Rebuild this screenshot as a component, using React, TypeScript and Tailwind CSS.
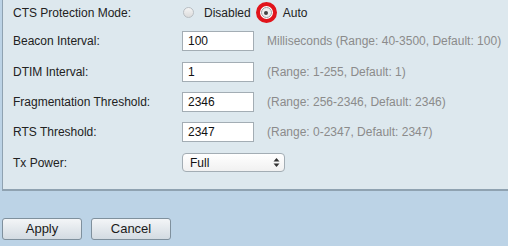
type FieldRowProps = {
  label: string;
  value: string;
  hint: string;
  className: string;
};

function FieldRow({ label, value, hint, className }: FieldRowProps) {
  return (
    <div className={`flex items-center ${className}`}>
      <span className="w-[169px] shrink-0">{label}</span>
      <div className="flex h-[20px] w-[72px] items-center border border-[#a3adb4] bg-white pl-[5px] text-[#111]">
        {value}
      </div>
      <span className="ml-[13px] text-[#8b8b8b]">{hint}</span>
    </div>
  );
}

export default function App() {
  return (
    <div className="h-[246px] w-[508px] overflow-hidden bg-[#bcd3e6] font-['Liberation_Sans',Arial,sans-serif] text-[12px] text-[#222]">
      <div className="ml-[2px] h-[191px] border-b-2 border-l border-[#8fa2b1] bg-[#dde8ee] pl-[10px]">
        <div className="flex h-[25px] items-center">
          <span className="w-[169px] shrink-0">CTS Protection Mode:</span>
          <span className="ml-[1px] h-[11px] w-[11px] rounded-full border border-[#b9bec2] bg-gradient-to-b from-[#f4f4f4] to-[#dcdcdc]" />
          <span className="ml-[10px]">Disabled</span>
          <span className="ml-[5px] flex h-[21px] w-[21px] items-center justify-center rounded-full border-[4px] border-[#e1141b] bg-white">
            <span className="flex h-[11px] w-[11px] items-center justify-center rounded-full border border-[#9aa0a4] bg-[#eee]">
              <span className="h-[4px] w-[4px] rounded-full bg-[#444]" />
            </span>
          </span>
          <span className="ml-[6px]">Auto</span>
        </div>
        <FieldRow
          className="h-[31px]"
          label="Beacon Interval:"
          value="100"
          hint="Milliseconds (Range: 40-3500, Default: 100)"
        />
        <FieldRow className="h-[31px]" label="DTIM Interval:" value="1" hint="(Range: 1-255, Default: 1)" />
        <FieldRow
          className="h-[30px]"
          label="Fragmentation Threshold:"
          value="2346"
          hint="(Range: 256-2346, Default: 2346)"
        />
        <FieldRow
          className="h-[30px]"
          label="RTS Threshold:"
          value="2347"
          hint="(Range: 0-2347, Default: 2347)"
        />
        <div className="flex h-[31px] items-center">
          <span className="w-[169px] shrink-0">Tx Power:</span>
          <div className="flex h-[19px] w-[103px] items-center justify-between rounded-[4px] border border-[#a3adb4] bg-gradient-to-b from-white to-[#f1f1f1] pl-[7px] pr-[4px]">
            <span className="text-[#111]">Full</span>
            <svg width="7" height="11" viewBox="0 0 7 11">
              <path d="M3.5 1 L6.5 4.5 H0.5 Z" fill="#333" />
              <path d="M3.5 10 L6.5 6.5 H0.5 Z" fill="#333" />
            </svg>
          </div>
        </div>
      </div>
      <div className="mt-[27px] flex gap-[9px] pl-[2px]">
        <button className="h-[22px] w-[80px] rounded-[3px] border border-[#7f909d] bg-gradient-to-b from-[#f3f5f7] to-[#d3dbe2] text-[13px] text-[#1a1a1a]">
          Apply
        </button>
        <button className="h-[22px] w-[80px] rounded-[3px] border border-[#7f909d] bg-gradient-to-b from-[#f3f5f7] to-[#d3dbe2] text-[13px] text-[#1a1a1a]">
          Cancel
        </button>
      </div>
    </div>
  );
}
